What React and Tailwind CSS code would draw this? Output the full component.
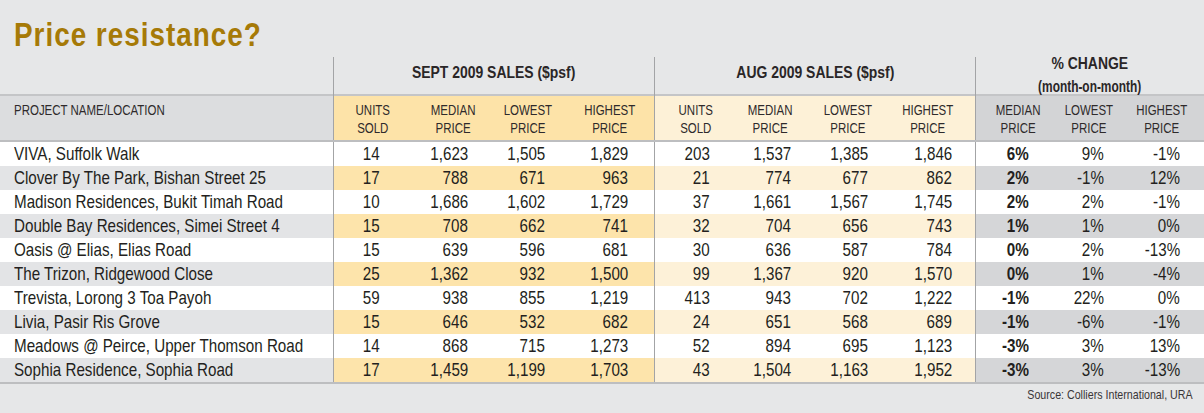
import React from 'react';

const rows = [
  ['VIVA, Suffolk Walk', '14', '1,623', '1,505', '1,829', '203', '1,537', '1,385', '1,846', '6%', '9%', '-1%'],
  ['Clover By The Park, Bishan Street 25', '17', '788', '671', '963', '21', '774', '677', '862', '2%', '-1%', '12%'],
  ['Madison Residences, Bukit Timah Road', '10', '1,686', '1,602', '1,729', '37', '1,661', '1,567', '1,745', '2%', '2%', '-1%'],
  ['Double Bay Residences, Simei Street 4', '15', '708', '662', '741', '32', '704', '656', '743', '1%', '1%', '0%'],
  ['Oasis @ Elias, Elias Road', '15', '639', '596', '681', '30', '636', '587', '784', '0%', '2%', '-13%'],
  ['The Trizon, Ridgewood Close', '25', '1,362', '932', '1,500', '99', '1,367', '920', '1,570', '0%', '1%', '-4%'],
  ['Trevista, Lorong 3 Toa Payoh', '59', '938', '855', '1,219', '413', '943', '702', '1,222', '-1%', '22%', '0%'],
  ['Livia, Pasir Ris Grove', '15', '646', '532', '682', '24', '651', '568', '689', '-1%', '-6%', '-1%'],
  ['Meadows @ Peirce, Upper Thomson Road', '14', '868', '715', '1,273', '52', '894', '695', '1,123', '-3%', '3%', '13%'],
  ['Sophia Residence, Sophia Road', '17', '1,459', '1,199', '1,703', '43', '1,504', '1,163', '1,952', '-3%', '3%', '-13%'],
];

// one entry per numeric column: group, cell padding, header padding, header text
const cols = [
  { g: 'sept', cell: 'pr-[34px]', head: 'pr-[24px]', label: ['UNITS', 'SOLD'] },
  { g: 'sept', cell: 'pr-[26px]', head: 'pr-[19px]', label: ['MEDIAN', 'PRICE'] },
  { g: 'sept', cell: 'pr-[29px]', head: 'pr-[22px]', label: ['LOWEST', 'PRICE'] },
  { g: 'sept', cell: 'pr-[26px] border-r border-[#a3a4a6]', head: 'pr-[19px] border-r border-[#a3a4a6]', label: ['HIGHEST', 'PRICE'] },
  { g: 'aug', cell: 'pr-[25px]', head: 'pr-[22px]', label: ['UNITS', 'SOLD'] },
  { g: 'aug', cell: 'pr-[24px]', head: 'pr-[23px]', label: ['MEDIAN', 'PRICE'] },
  { g: 'aug', cell: 'pr-[27px]', head: 'pr-[23px]', label: ['LOWEST', 'PRICE'] },
  { g: 'aug', cell: 'pr-[23px] border-r border-[#a3a4a6]', head: 'pr-[22px] border-r border-[#a3a4a6]', label: ['HIGHEST', 'PRICE'] },
  { g: 'pct', cell: 'pr-[23px] font-bold', head: 'pr-[12px]', label: ['MEDIAN', 'PRICE'] },
  { g: 'pct', cell: 'pr-[24px]', head: 'pr-[15px]', label: ['LOWEST', 'PRICE'] },
  { g: 'pct', cell: 'pr-[24px]', head: 'pr-[17px]', label: ['HIGHEST', 'PRICE'] },
];

const headBg = { sept: 'bg-[#fde3a8]', aug: 'bg-[#fdf1d7]', pct: 'bg-[#d3d4d6]' };
const stripeBg = { sept: 'bg-[#fde4ab]', aug: 'bg-[#fdf1d8]', pct: 'bg-[#d5d6d8]' };

const gridCols = 'grid grid-cols-[334px_80px_80px_80px_81px_80px_80px_80px_81px_76px_76px_76px]';

// the print uses a condensed face; squeeze Liberation Sans to about Arial Narrow width
const Narrow = ({ origin = 'origin-right', children }) => (
  <span className={`inline-block whitespace-nowrap scale-x-[0.82] ${origin}`}>{children}</span>
);

export default function App() {
  return (
    <div
      className="w-[1204px] h-[413px] bg-[#e6e7e8] text-[#231f20] overflow-hidden"
      style={{ fontFamily: '"Liberation Sans", Arial, sans-serif' }}
    >
      <div className="h-[57px] pl-[14px] pt-[17px]">
        <h1 className="text-[34px] leading-none font-bold tracking-[1.2px] text-[#a67a07]">
          <Narrow origin="origin-left">Price resistance?</Narrow>
        </h1>
      </div>

      {/* group headers */}
      <div className="grid grid-cols-[334px_321px_321px_228px] h-[39px] border-b-2 border-[#c4c5c7]">
        <div className="border-r border-[#a3a4a6]" />
        <div className="border-r border-[#a3a4a6] pt-[6px] text-center text-[17px] leading-[20px] font-bold text-[#2a2627]">
          <Narrow origin="origin-center">SEPT 2009 SALES ($psf)</Narrow>
        </div>
        <div className="border-r border-[#a3a4a6] pt-[6px] text-center text-[17px] leading-[20px] font-bold text-[#2a2627]">
          <Narrow origin="origin-center">AUG 2009 SALES ($psf)</Narrow>
        </div>
        <div className="-mt-[5px] text-center text-[17px] leading-[23px] font-bold text-[#2a2627]">
          <div><Narrow origin="origin-center">% CHANGE</Narrow></div>
          <div>
            <span className="inline-block whitespace-nowrap scale-x-[0.7] origin-center">(month-on-month)</span>
          </div>
        </div>
      </div>

      {/* column headers */}
      <div className={`${gridCols} h-[46px] border-b-2 border-[#bdbec0] text-[14px] leading-[18px] text-[#2e2a2b]`}>
        <div className="bg-[#dcdddf] border-r border-[#a3a4a6] pl-[14px] pt-[5px]">
          <Narrow origin="origin-left">PROJECT NAME/LOCATION</Narrow>
        </div>
        {cols.map((c, i) => (
          <div key={i} className={`${headBg[c.g]} ${c.head} flex justify-end items-start pt-[5px]`}>
            <div className="text-center whitespace-nowrap scale-x-[0.82] origin-right">
              <div>{c.label[0]}</div>
              <div>{c.label[1]}</div>
            </div>
          </div>
        ))}
      </div>

      {/* data rows */}
      <div className="border-b-2 border-[#bdbec0]">
        {rows.map((r, ri) => {
          const striped = ri % 2 === 1;
          return (
            <div key={ri} className={`${gridCols} h-[24px] leading-[24px] text-[18.5px]`}>
              <div className={`${striped ? 'bg-[#e3e4e6]' : 'bg-white'} border-r border-[#a3a4a6] pl-[14px] overflow-hidden`}>
                <Narrow origin="origin-left">{r[0]}</Narrow>
              </div>
              {cols.map((c, ci) => (
                <div key={ci} className={`${striped ? stripeBg[c.g] : 'bg-white'} ${c.cell} text-right`}>
                  <Narrow>{r[ci + 1]}</Narrow>
                </div>
              ))}
            </div>
          );
        })}
      </div>

      <div className="pt-[3px] pr-[11px] text-right text-[13px] leading-[16px] text-[#3a3637]">
        <Narrow>Source: Colliers International, URA</Narrow>
      </div>
    </div>
  );
}
